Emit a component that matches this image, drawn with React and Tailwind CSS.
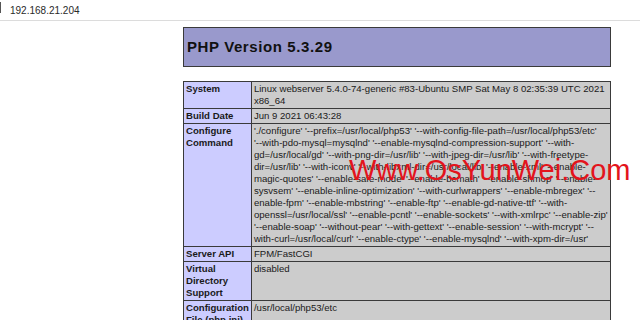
import React from "react";

const configLines = [
  "'./configure' '--prefix=/usr/local/php53' '--with-config-file-path=/usr/local/php53/etc'",
  "'--with-pdo-mysql=mysqlnd' '--enable-mysqlnd-compression-support' '--with-",
  "gd=/usr/local/gd' '--with-png-dir=/usr/lib' '--with-jpeg-dir=/usr/lib' '--with-freetype-",
  "dir=/usr/lib' '--with-iconv' '--with-libxml-dir=/usr/local/lib' '--enable-xml' '--enable-",
  "magic-quotes' '--enable-safe-mode' '--enable-bcmath' '--enable-shmop' '--enable-",
  "sysvsem' '--enable-inline-optimization' '--with-curlwrappers' '--enable-mbregex' '--",
  "enable-fpm' '--enable-mbstring' '--enable-ftp' '--enable-gd-native-ttf' '--with-",
  "openssl=/usr/local/ssl' '--enable-pcntl' '--enable-sockets' '--with-xmlrpc' '--enable-zip'",
  "'--enable-soap' '--without-pear' '--with-gettext' '--enable-session' '--with-mcrypt' '--",
  "with-curl=/usr/local/curl' '--enable-ctype' '--enable-mysqlnd' '--with-xpm-dir=/usr'",
];

const rows = [
  {
    label: ["System"],
    value: ["Linux webserver 5.4.0-74-generic #83-Ubuntu SMP Sat May 8 02:35:39 UTC 2021", "x86_64"],
  },
  { label: ["Build Date"], value: ["Jun 9 2021 06:43:28"] },
  { label: ["Configure", "Command"], value: configLines },
  { label: ["Server API"], value: ["FPM/FastCGI"] },
  { label: ["Virtual", "Directory", "Support"], value: ["disabled"] },
  { label: ["Configuration", "File (php.ini)", "Path"], value: ["/usr/local/php53/etc"] },
];

export default function App() {
  return (
    <div className="relative w-[640px] h-[320px] overflow-hidden bg-white font-['Liberation_Sans',Arial,sans-serif]">
      <div className="relative h-[21px] border-b border-[#dcdcdc] flex items-center pl-[10px] text-[10px] text-[#2a2a2a]">
        <div className="absolute left-0 top-[2px] h-[11px] w-px bg-[#555]" />
        <span>192.168.21.204</span>
      </div>
      <div className="pl-[183px] pt-[6px]">
        <div className="w-[428px] h-[40px] bg-[#9999cc] border border-[#3a3a3a] flex items-center pl-[3px]">
          <h1 className="text-[15px] font-bold tracking-[0.6px] text-[#111]">PHP Version 5.3.29</h1>
        </div>
        <table className="mt-[14px] w-[428px] border-collapse text-[9.6px] leading-[12px] text-[#1a1a1a]">
          <tbody>
            {rows.map((r, i) => (
              <tr key={i}>
                <td className="w-[64px] align-top bg-[#ccccff] border border-[#3a3a3a] px-[2px] py-[1px] font-bold whitespace-nowrap">
                  {r.label.map((l, j) => (
                    <div key={j}>{l}</div>
                  ))}
                </td>
                <td className="align-top bg-[#cccccc] border border-[#3a3a3a] px-[2px] py-[1px] whitespace-nowrap">
                  {r.value.map((v, j) => (
                    <div key={j}>{v}</div>
                  ))}
                </td>
              </tr>
            ))}
          </tbody>
        </table>
      </div>
      <div className="absolute left-[349px] top-[156px] text-[29px] leading-none text-[#e3141c] whitespace-nowrap">
        Www.OsYunWei.Com
      </div>
    </div>
  );
}
